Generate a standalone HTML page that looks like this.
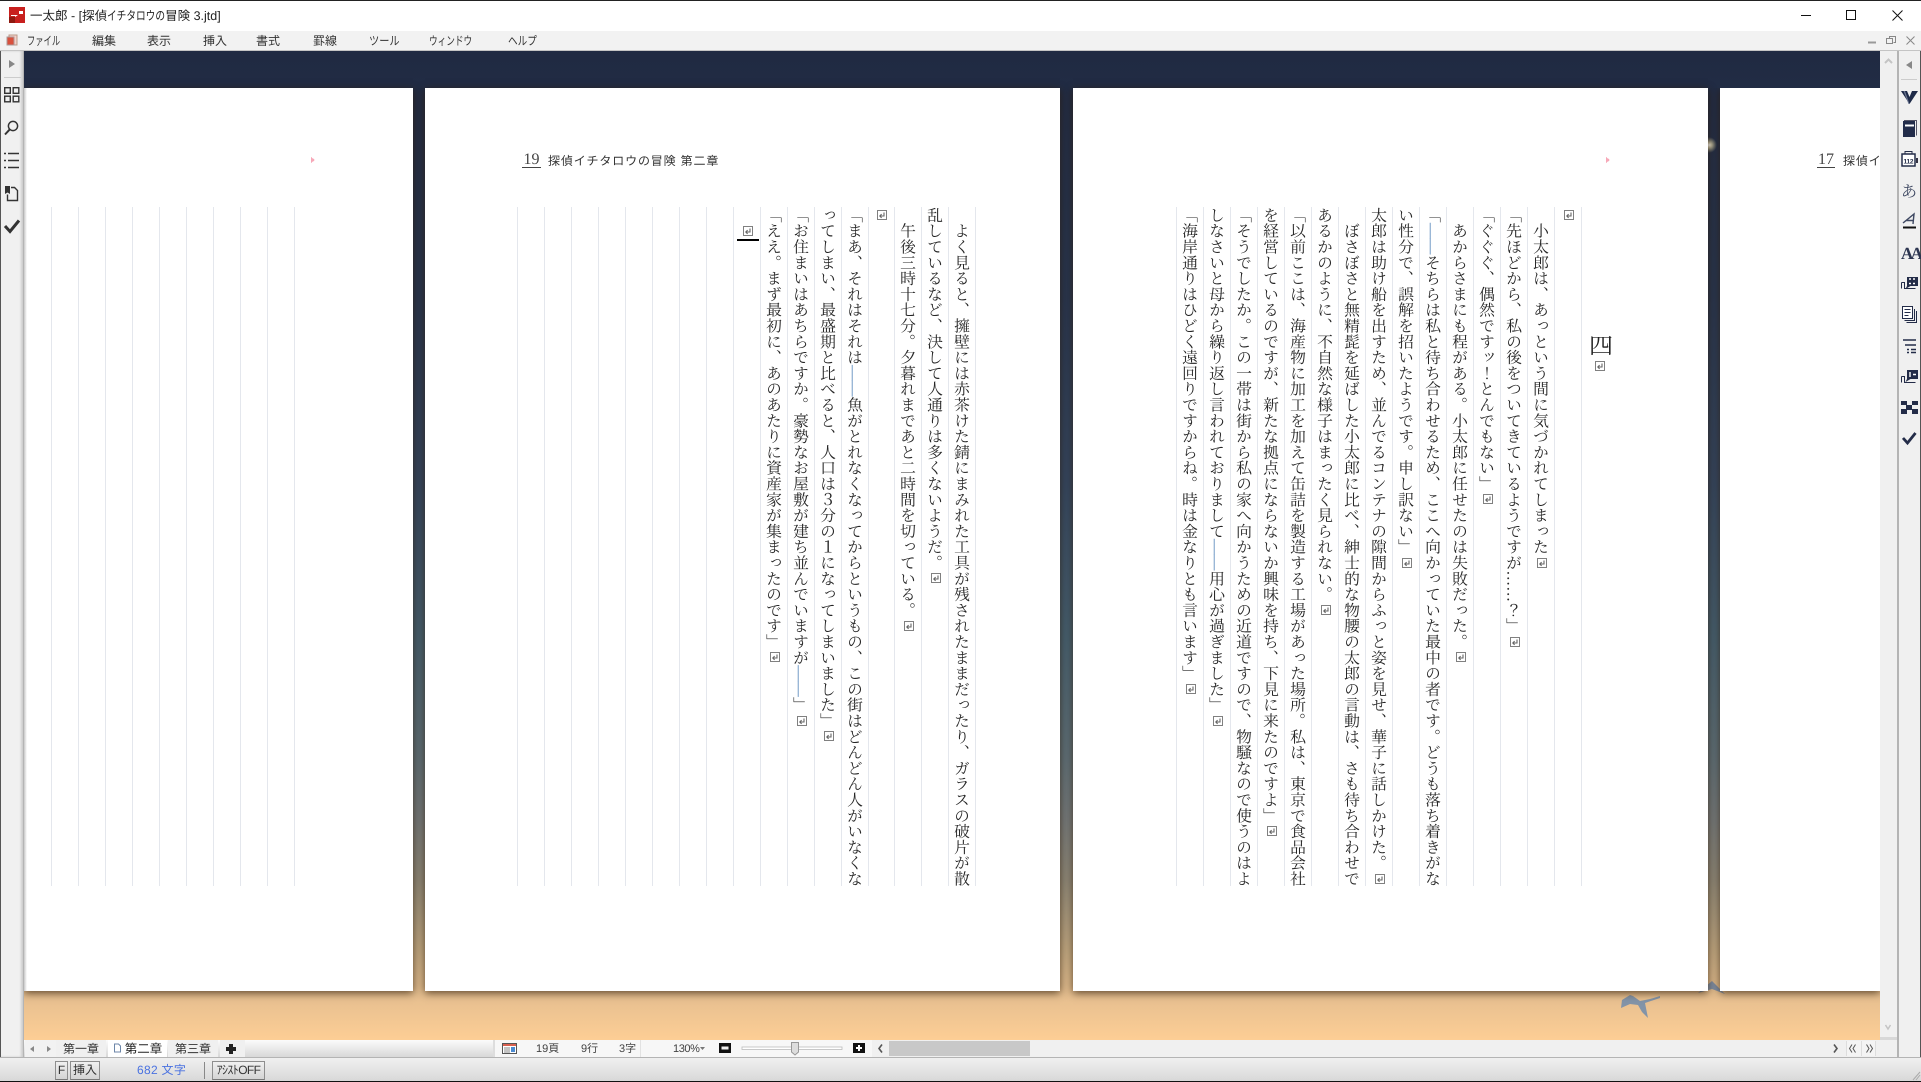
<!DOCTYPE html>
<html lang="ja"><head><meta charset="utf-8"><title>一太郎</title>
<style>
html,body{margin:0;padding:0;width:1921px;height:1082px;overflow:hidden;background:#f0f0f0}
body{position:relative;font-family:"Liberation Sans","Noto Sans CJK JP",sans-serif;font-size:12px;color:#333;text-rendering:geometricPrecision}
div,span.a{position:absolute;box-sizing:border-box}
.pg{background:#fff;top:88px;height:903px;box-shadow:0 2px 8px rgba(50,30,10,.75)}
.m{top:32px;line-height:18px;white-space:nowrap;color:#333;font-size:12px;transform-origin:left center}
.c{position:absolute;top:207px;height:690px;width:27px;writing-mode:vertical-rl;font:15.8px/27px "Liberation Serif","Noto Serif CJK SC",serif;white-space:nowrap;color:#262626}
.c b{font-weight:normal;color:#4f82b8}
.r{display:inline-block;width:10px;height:10px;margin:3px 0;vertical-align:middle}
.t{top:1041px;height:16px;line-height:16px;text-align:center;white-space:nowrap;color:#333;background:#f0f0f0}
.s{top:1041px;height:16px;line-height:16px;white-space:nowrap;color:#444;font-size:11px}
.b{top:1061px;height:19px;line-height:16px;text-align:center;border:1px solid #8e8e8e;border-bottom-color:#777;background:linear-gradient(#f0f0f0,#d4d4d4);color:#333;white-space:nowrap;font-size:12px}
.h{font:12px/14px "Liberation Sans","Noto Sans CJK JP",sans-serif;white-space:nowrap;color:#333;top:154px;letter-spacing:.85px}
.n{font:16px/14px "Liberation Serif",serif;color:#444;top:153px;border-bottom:1px solid #444;height:15px;text-align:center}
</style></head><body>
<svg width="0" height="0" style="position:absolute"><defs>
<symbol id="k" viewBox="0 0 10 10"><rect x=".5" y=".5" width="9" height="9" fill="#fff" stroke="#808080"/><path d="M7 2.500V6H3M4.600 4.200L2.800 6l1.800 1.800" fill="none" stroke="#666" stroke-width="1.100"/></symbol>
</defs></svg>

<!-- title bar -->
<div style="left:0;top:0;width:1921px;height:31px;background:#fff;border-top:1px solid #222"></div>
<div style="left:30px;top:6px;line-height:20px;font-size:12.5px;color:#222;white-space:nowrap">一太郎 - [探偵<span style="display:inline-block;width:58px;vertical-align:top"><span style="display:inline-block;transform:scaleX(.773);transform-origin:left center">イチタロウの</span></span>冒険 3.jtd]</div>
<!-- menu -->
<div style="left:0;top:31px;width:1921px;height:20px;background:#f2f2f2;border-bottom:1px solid #c4c4c4"></div>
<div class="m" style="left:27px;transform:scaleX(.69)">ファイル</div><div class="m" style="left:92px">編集</div><div class="m" style="left:147px">表示</div><div class="m" style="left:203px">挿入</div><div class="m" style="left:256px">書式</div><div class="m" style="left:313px">罫線</div><div class="m" style="left:369px;transform:scaleX(.85)">ツール</div><div class="m" style="left:429px;transform:scaleX(.72)">ウィンドウ</div><div class="m" style="left:508px;transform:scaleX(.8)">ヘルプ</div>

<!-- document backdrop -->
<div style="left:24px;top:51px;width:1856px;height:989px;background:linear-gradient(#202a42 0,#28364f 250px,#34465f 429px,#466070 589px,#5f7078 709px,#757a7b 769px,#8e8878 829px,#c0a882 899px,#e8c090 949px,#fdce95 989px)"></div>
<svg width="1921" height="1082" style="position:absolute;left:0;top:0">
<defs><radialGradient id="gl"><stop offset="0" stop-color="#fff"/><stop offset=".3" stop-color="#e8e0b8" stop-opacity=".8"/><stop offset="1" stop-color="#c8c090" stop-opacity="0"/></radialGradient></defs>
<circle cx="1709" cy="145" r="8" fill="url(#gl)"/>
<path d="M1698 993L1712 981L1725 994L1712 989Z" fill="#7f8ea3"/>
<path d="M1621 1008L1622 1000L1630 995L1633 996L1640 1001L1650 999L1660 996L1660 998L1645 1003L1648 1018L1642 1012L1638 1005L1630 1004Z" fill="#8394a8"/>
</svg>

<!-- pages -->
<div class="pg" style="left:24px;width:389px"></div>
<div style="left:24px;top:88px;width:3px;height:903px;background:linear-gradient(90deg,#c8c8c8,#fff)"></div>
<div class="pg" style="left:425px;width:635px"></div>
<div class="pg" style="left:1073px;width:635px"></div>
<div style="left:1720px;top:88px;width:160px;height:903px;background:#fff;box-shadow:0 2px 8px rgba(50,30,10,.75);clip-path:inset(0 0 -12px -12px)"></div>

<!-- ruled lines -->
<svg width="1921" height="1082" style="position:absolute;left:0;top:0" shape-rendering="crispEdges">
<path fill="none" stroke="#e4e7ed" stroke-width="1" d="M51.500 207V886M78.500 207V886M105.500 207V886M132.500 207V886M159.500 207V886M186.500 207V886M213.500 207V886M240.500 207V886M267.500 207V886M294.500 207V886
M517.500 207V886M544.500 207V886M571.500 207V886M598.500 207V886M625.500 207V886M652.500 207V886M679.500 207V886M706.500 207V886M733.500 207V886M760.500 207V886M787.500 207V886M814.500 207V886M841.500 207V886M868.500 207V886M894.500 207V886M921.500 207V886M948.500 207V886M975.500 207V886
M1176.500 207V886M1203.500 207V886M1230.500 207V886M1257.500 207V886M1284.500 207V886M1311.500 207V886M1338.500 207V886M1365.500 207V886M1392.500 207V886M1419.500 207V886M1446.500 207V886M1473.500 207V886M1500.500 207V886M1527.500 207V886M1554.500 207V886M1581.500 207V886"/>
<path d="M311 157l4 3-4 3z" fill="#f7a8b8"/><path d="M1606 157l4 3-4 3z" fill="#f7a8b8"/>
<rect x="737" y="239" width="22" height="2" fill="#000"/>
</svg>

<!-- page headers -->
<div class="n" style="left:522px;width:19px">19</div>
<div class="h" style="left:548px">探偵イチタロウの冒険 第二章</div>
<div class="n" style="left:1817px;width:18px">17</div>
<div class="h" style="left:1843px;width:37px;overflow:hidden">探偵イチタロウの冒険</div>

<!-- page 2 text -->
<div class="c" style="left:946.500px">　よく見ると、擁壁には赤茶けた錆にまみれた工具が残されたままだったり、ガラスの破片が散</div>
<div class="c" style="left:919.500px">乱しているなど、決して人通りは多くないようだ。<svg class="r"><use href="#k"/></svg></div>
<div class="c" style="left:892.500px">　午後三時十七分。夕暮れまであと二時間を切っている。<svg class="r"><use href="#k"/></svg></div>
<div class="c" style="left:865.500px"><svg class="r"><use href="#k"/></svg></div>
<div class="c" style="left:839.500px">「まあ、それはそれは<b>――</b>魚がとれなくなってからというもの、この街はどんどん人がいなくな</div>
<div class="c" style="left:812.500px">ってしまい、最盛期と比べると、人口は３分の１になってしまいました」<svg class="r"><use href="#k"/></svg></div>
<div class="c" style="left:785.500px">「お住まいはあちらですか。豪勢なお屋敷が建ち並んでいますが<b>――</b>」<svg class="r"><use href="#k"/></svg></div>
<div class="c" style="left:758.500px">「ええ。まず最初に、あのあたりに資産家が集まったのです」<svg class="r"><use href="#k"/></svg></div>
<div class="c" style="left:731px;padding-top:16px"><svg class="r"><use href="#k"/></svg></div>

<!-- page 3 text -->
<div class="c" style="left:1552.500px"><svg class="r"><use href="#k"/></svg></div>
<div class="c" style="left:1525.500px">　小太郎は、あっという間に気づかれてしまった<svg class="r"><use href="#k"/></svg></div>
<div class="c" style="left:1498.500px">「先ほどから、私の後をついてきているようですが……？」<svg class="r"><use href="#k"/></svg></div>
<div class="c" style="left:1471.500px">「ぐぐぐ、偶然ですッ！とんでもない」<svg class="r"><use href="#k"/></svg></div>
<div class="c" style="left:1444.500px">　あからさまにも程がある。小太郎に任せたのは失敗だった。<svg class="r"><use href="#k"/></svg></div>
<div class="c" style="left:1417.500px">「<b>――</b>そちらは私と待ち合わせるため、ここへ向かっていた最中の者です。どうも落ち着きがな</div>
<div class="c" style="left:1390.500px">い性分で、誤解を招いたようです。申し訳ない」<svg class="r"><use href="#k"/></svg></div>
<div class="c" style="left:1363.500px">太郎は助け船を出すため、並んでるコンテナの隙間からふっと姿を見せ、華子に話しかけた。<svg class="r"><use href="#k"/></svg></div>
<div class="c" style="left:1336.500px">　ぼさぼさと無精髭を延ばした小太郎に比べ、紳士的な物腰の太郎の言動は、さも待ち合わせで</div>
<div class="c" style="left:1309.500px">あるかのように、不自然な様子はまったく見られない。<svg class="r"><use href="#k"/></svg></div>
<div class="c" style="left:1282.500px">「以前ここは、海産物に加工を加えて缶詰を製造する工場があった場所。私は、東京で食品会社</div>
<div class="c" style="left:1255.500px">を経営しているのですが、新たな拠点にならないか興味を持ち、下見に来たのですよ」<svg class="r"><use href="#k"/></svg></div>
<div class="c" style="left:1228.500px">「そうでしたか。この一帯は街から私の家へ向かうための近道ですので、物騒なので使うのはよ</div>
<div class="c" style="left:1201.500px">しなさいと母から繰り返し言われておりまして<b>――</b>用心が過ぎました」<svg class="r"><use href="#k"/></svg></div>
<div class="c" style="left:1174.500px">「海岸通りはひどく遠回りですからね。時は金なりとも言います」<svg class="r"><use href="#k"/></svg></div>
<div style="left:1589px;top:335px;font:24px/24px 'Liberation Serif','Noto Serif CJK SC',serif;color:#222">四</div>
<svg style="position:absolute;left:1595px;top:361px" width="10" height="10"><use href="#k"/></svg>

<!-- left toolbar -->
<div style="left:0;top:51px;width:24px;height:1006px;background:#f0f0f0;border-left:1px solid #555;border-right:1px solid #b4b4b4;box-shadow:inset -2px 0 2px #ccc"></div>
<!-- right scroll & toolbar -->
<div style="left:1880px;top:51px;width:17px;height:989px;background:#f0f0f0"></div>
<div style="left:1880px;top:1037px;width:17px;height:3px;background:#d8d8d8"></div>
<div style="left:1897px;top:51px;width:24px;height:1006px;background:#f0f0f0;border-left:2px solid #b4b4b4;border-right:1px solid #555"></div>

<!-- tab bar -->
<div style="left:24px;top:1040px;width:469px;height:17px;background:linear-gradient(#fbfbfb,#d8d8d8)"></div>
<div style="left:493px;top:1040px;width:148px;height:17px;background:#f7f7f7;border-left:2px solid #ddd;border-right:1px solid #e2e2e2"></div>
<div style="left:641px;top:1040px;width:235px;height:17px;background:#f7f7f7"></div>
<div style="left:872px;top:1040px;width:1008px;height:17px;background:#f0f0f0"></div>
<div style="left:889px;top:1041px;width:141px;height:15px;background:#c8c8c8"></div>
<div style="left:1846px;top:1041px;width:15px;height:15px;background:#f4f4f4;border-left:1px solid #ddd"></div>
<div style="left:1861px;top:1041px;width:15px;height:15px;background:#f4f4f4;border-left:1px solid #ddd;border-right:1px solid #ddd"></div>
<div class="t" style="left:25px;width:31px;background:#f2f2f2;top:1040px;height:17px"></div>
<div class="t" style="left:56px;width:50px;top:1040px;height:17px;padding-top:1px">第一章</div>
<div class="t" style="left:108px;width:59px;background:#fff;padding-left:12px;color:#222;font-size:12.5px;top:1040px;height:17px;padding-top:1px">第二章</div>
<div class="t" style="left:168px;width:50px;top:1040px;height:17px;padding-top:1px">第三章</div>
<div class="t" style="left:220px;width:25px;top:1040px;height:17px"></div>
<div class="s" style="left:536px">19頁</div><div class="s" style="left:581px">9行</div><div class="s" style="left:619px">3字</div><div class="s" style="left:673px;letter-spacing:-.4px">130%</div>

<!-- status bar -->
<div style="left:0;top:1057px;width:1921px;height:24px;background:linear-gradient(#f0f0f0,#d8d8d8);border-top:1px solid #b4b4b4"></div>
<div style="left:0;top:1081px;width:1921px;height:1px;background:#111"></div>
<div class="b" style="left:55px;width:13px">F</div>
<div class="b" style="left:70px;width:30px">挿入</div>
<div style="left:137px;top:1060px;line-height:20px;color:#4a72e0;font-size:12px;white-space:nowrap;letter-spacing:.3px">682 文字</div>
<div style="left:204px;top:1062px;width:1px;height:17px;background:#888"></div>
<div class="b" style="left:212px;width:53px;font-size:12px;letter-spacing:-.6px">ｱｼｽﾄOFF</div>

<!-- icons overlay -->
<svg width="1921" height="1082" style="position:absolute;left:0;top:0">
<!-- app icon -->
<rect x="9" y="7" width="16" height="16" fill="#c8201e"/><rect x="9" y="17" width="6" height="6" fill="#8e1a10"/>
<path d="M11 15h7l-3 2v-1h-4zM19 11h4v3h-4z" fill="#fff"/>
<!-- menu doc icon -->
<path d="M9 35h8v10H9z" fill="#f6d0c8" stroke="#b98" /><path d="M7 37h7v8H7z" fill="#d9503c" stroke="#a99"/>
<!-- window controls -->
<path d="M1801 15.500h10" stroke="#111" stroke-width="1"/>
<rect x="1846.500" y="10.500" width="9" height="9" fill="none" stroke="#111"/>
<path d="M1892.500 10.500l10 10M1902.500 10.500l-10 10" stroke="#111" fill="none"/>
<path d="M1868 42.500h8" stroke="#999" stroke-width="2"/>
<path d="M1889.500 38.500v-2h6v6h-2M1886.500 38.500h6v5h-6z" fill="none" stroke="#888"/>
<path d="M1906.500 36.500l8 8M1914.500 36.500l-8 8" stroke="#888" fill="none"/>
<!-- left toolbar -->
<path d="M9 60l6 4-6 4z" fill="#888"/><path d="M4 77.500h17" stroke="#ccc"/>
<g fill="none" stroke="#333" stroke-width="1.400"><rect x="4.700" y="87.700" width="5.600" height="5.600"/><rect x="13.200" y="87.700" width="5.600" height="5.600"/><rect x="4.700" y="96.200" width="5.600" height="5.600"/><rect x="13.200" y="96.200" width="5.600" height="5.600"/></g>
<circle cx="13" cy="126" r="4.600" fill="none" stroke="#333" stroke-width="1.500"/><path d="M9.600 129.600L5 134.500" stroke="#333" stroke-width="2"/>
<path d="M8 153.500h11M8 160.500h11M8 167.500h11" stroke="#333" stroke-width="1.400"/><path d="M4 153.500h2M4 160.500h2M4 167.500h2" stroke="#333" stroke-width="1.400"/>
<path d="M5 186h5v8l-2.500-1.500L5 194z" fill="#333"/><path d="M11 187.500h3.500l3 3V200.500H7.500v-6" fill="none" stroke="#333" stroke-width="1.400"/>
<path d="M5 226l5 5.500 9-11" fill="none" stroke="#333" stroke-width="3"/>
<!-- right scroll chevrons -->
<path d="M1885 63l3.500-3.500 3.500 3.500" fill="none" stroke="#c4c4c4" stroke-width="2"/>
<path d="M1885.500 1025l2.500 4 2.500-4" fill="none" stroke="#c4c4c4" stroke-width="1.500"/>
<!-- right toolbar -->
<path d="M1912 61v8l-6-4z" fill="#888"/><path d="M1901 79.500h16" stroke="#ccc"/>
<path d="M1901 91h6l2.500 6 2.500-6h6l-8.500 13z" fill="#1e2a48"/><path d="M1905 91l4.500 13-1 0-5-13z" fill="#6a7590"/>
<rect x="1903" y="121" width="12" height="16" fill="#222c4a"/><path d="M1905 125.500h9" stroke="#fff" stroke-width="2"/><path d="M1904 120.500h12.500v15" fill="none" stroke="#556"/>
<rect x="1902" y="154" width="13" height="12" fill="#fff" stroke="#232c48" stroke-width="1.500"/><path d="M1905 154v-2.500h7v2.500" fill="none" stroke="#232c48"/><rect x="1916" y="158" width="2" height="5" fill="#334"/>
<text x="1903.500" y="163.500" font-family="Liberation Sans" font-size="6.500" font-weight="bold" fill="#232c48" textLength="10">112</text>
<text x="1909" y="197" text-anchor="middle" font-family="Noto Serif CJK JP,Noto Serif CJK SC,serif" font-size="16" fill="#3e4862">あ</text>
<path d="M1903 223l11-9-1 10M1906 220.500h7" fill="none" stroke="#3e4862" stroke-width="1.400"/><path d="M1903 227.500h13" stroke="#111" stroke-width="2"/>
<text x="1901" y="259" font-family="Liberation Serif" font-size="17" font-weight="bold" fill="#2c3550" letter-spacing="-2.500">AA</text>
<path d="M1901.500 282.500h3v6h11" fill="none" stroke="#232c48"/><path d="M1901.500 282.500v6" stroke="#232c48"/><rect x="1907" y="277" width="11" height="9" fill="#232c48"/><path d="M1907 286l-1.500 3 5-3z" fill="#232c48"/><path d="M1909 279h2M1913 279h2M1909 283.500h2M1913 283.500h2" stroke="#fff" stroke-width="1.500"/>
<rect x="1902.500" y="306.500" width="10" height="12" fill="#fff" stroke="#232c48"/><path d="M1904.500 309.500h6M1904.500 312.500h6M1904.500 315.500h4" stroke="#232c48"/><path d="M1914.500 309v11.500h-10M1916.500 311v11.500h-10" fill="none" stroke="#232c48"/>
<path d="M1903 340h13M1905 345h11M1907 349.500h2M1911 349.500h5M1907 352.500h2M1911 352.500h5" stroke="#232c48" stroke-width="1.400"/>
<path d="M1901.500 376.500h3v6h11" fill="none" stroke="#232c48"/><path d="M1901.500 376.500v6" stroke="#232c48"/><rect x="1907" y="370" width="11" height="9" fill="#232c48"/><path d="M1907 379l-1.500 3 5-3z" fill="#232c48"/><path d="M1910 372v5M1913 374.500h3" stroke="#fff" stroke-width="1.400"/>
<rect x="1901" y="401" width="17" height="13" fill="#232c48"/><path d="M1907 401h5v4h-5zM1901 405h5v4h-5zM1912 405h6v4h-6zM1907 410h5v4h-5z" fill="#f0f0f0"/>
<path d="M1903 438l4.500 5 8-10" fill="none" stroke="#232c48" stroke-width="2.800"/>
<!-- tab arrows -->
<path d="M34 1046v6l-4-3z" fill="#888"/><path d="M47 1046v6l4-3z" fill="#888"/>
<path d="M114.500 1044h4l2 2v6h-6z" fill="#fff" stroke="#6c86a8"/>
<path d="M229 1044h4v3h3v4h-3v3h-4v-3h-3v-4h3z" fill="#222"/>
<!-- status icon -->
<rect x="502.500" y="1043.500" width="14" height="10" fill="#fff" stroke="#555"/><path d="M503 1044h13v2h-13z" fill="#d86050"/><path d="M504 1048h6M504 1050h6M504 1052h6" stroke="#888" stroke-width="1"/><rect x="511" y="1047" width="4" height="5" fill="#4a8ad0"/>
<path d="M700 1047h5l-2.500 3z" fill="#777"/>
<!-- zoom controls -->
<rect x="719" y="1043" width="12" height="10" fill="#111"/><rect x="721.500" y="1046.500" width="7" height="3" fill="#eee"/>
<rect x="853" y="1043" width="12" height="10" fill="#111"/><path d="M859 1045v6M856 1048h6" stroke="#fff" stroke-width="2"/>
<rect x="742" y="1047" width="100" height="2.500" fill="#fff" stroke="#bbb" stroke-width=".8"/>
<path d="M791.500 1042.500h7v9.500l-3.500 3-3.500-3z" fill="#ddd" stroke="#999"/>
<!-- hscroll arrows -->
<path d="M882 1044.500l-3 4 3 4" fill="none" stroke="#555" stroke-width="1.600"/>
<path d="M1834 1044.500l3 4-3 4" fill="none" stroke="#555" stroke-width="1.600"/>
<path d="M1852 1044.500l-2.500 4 2.500 4M1855.500 1044.500l-2.500 4 2.500 4" fill="none" stroke="#555"/>
<path d="M1866.500 1044.500l2.500 4-2.500 4M1870 1044.500l2.500 4-2.500 4" fill="none" stroke="#555"/>
<path d="M1913 1080l7-8M1916 1080l4-5" stroke="#aaa"/>
</svg>
</body></html>
